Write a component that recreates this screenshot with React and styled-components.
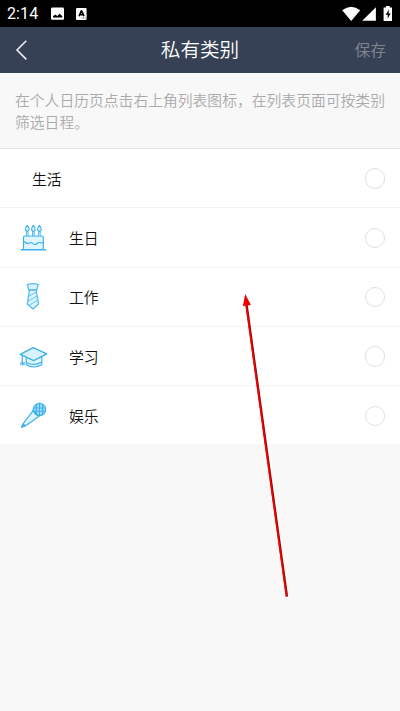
import React from "react";
import styled, { createGlobalStyle } from "styled-components";

const GlobalStyle = createGlobalStyle`
  * { box-sizing: border-box; }
  html, body { margin: 0; background: #f8f8f8; }
  body { font-family: Roboto, "Noto Sans CJK SC", sans-serif; }
`;

const Screen = styled.div`
  position: relative;
  display: flex;
  flex-direction: column;
  width: 400px;
  height: 711px;
  overflow: hidden;
  background: #f8f8f8;
`;

const StatusBar = styled.div`
  display: flex;
  align-items: center;
  justify-content: space-between;
  flex: none;
  height: 27px;
  padding: 0 7px;
  background: #000;
  color: #fff;
`;

const StatusGroup = styled.div`
  display: flex;
  align-items: center;
  gap: 12px;
`;

const Clock = styled.span`
  width: 32px;
  padding-top: 1px;
  font-size: 16px;
  line-height: 26px;
  font-weight: 400;
  letter-spacing: 0.1px;
`;

const Header = styled.header`
  display: grid;
  grid-template-columns: 80px 1fr 80px;
  align-items: center;
  flex: none;
  height: 46px;
  padding: 0 14px;
  background: #364156;
  color: #fff;
`;

const BackButton = styled.button`
  display: flex;
  padding: 0;
  border: 0;
  background: none;
  color: #f0f2f5;
`;

const Title = styled.h1`
  margin: 0;
  padding-top: 2px;
  font-size: 19.6px;
  line-height: 44px;
  font-weight: 350;
  text-align: center;
`;

const SaveButton = styled.button`
  padding: 2px 0 0;
  border: 0;
  background: none;
  color: #7f848d;
  font: inherit;
  font-size: 15.6px;
  line-height: 44px;
  text-align: right;
`;

const Hint = styled.p`
  flex: none;
  height: 76px;
  margin: 0;
  padding: 18px 0 0 15px;
  border-bottom: 1px solid #dfe3ea;
  color: #aaa;
  font-size: 14.8px;
  line-height: 21.5px;
  font-weight: 350;
  white-space: nowrap;
`;

const List = styled.ul`
  flex: none;
  margin: 0;
  padding: 0;
  list-style: none;
  background: #fff;
`;

const Row = styled.li`
  display: flex;
  align-items: center;
  height: 59.3px;
  padding: 1px 15px 0 ${(p) => (p.$plain ? "32px" : "19px")};
  border-bottom: 1px solid #f2f2f2;

  &:last-child {
    height: 58.3px;
    border-bottom: 0;
  }
`;

const RowIcon = styled.span`
  display: flex;
  width: 50px;
`;

const Label = styled.span`
  flex: 1;
  padding-top: 2px;
  color: #111;
  font-size: 14.8px;
  line-height: 22px;
  font-weight: 350;
`;

const Radio = styled.span`
  width: 20.5px;
  height: 20.5px;
  border: 1.4px solid #e0e0e0;
  border-radius: 50%;
`;

const Arrow = styled.svg`
  position: absolute;
  left: 240px;
  top: 290px;
  pointer-events: none;
`;

const PhotoIcon = () => (
  <svg width="13" height="13" viewBox="0 0 13 13">
    <rect width="13" height="12.4" y=".4" rx="1.3" fill="#fff" />
    <path d="M2 10.6V9.2L4.3 7.6 6.3 9 8.7 6.8 11.3 9.2V10.6Z" fill="#000" />
  </svg>
);

const KeyboardBadgeIcon = () => (
  <svg width="11" height="12" viewBox="0 0 11 12">
    <rect width="10.6" height="12" rx="1" fill="#fff" />
    <path d="M3 8.2 5.2 3h.5L8 8.2M3.8 6.6h3.3" fill="none" stroke="#000" strokeWidth="1.6" />
    <path d="M5.5 10h1M7.1 10h1M8.7 10h1" stroke="#333" strokeWidth=".8" />
  </svg>
);

const SignalIcons = () => (
  <svg width="51" height="16" viewBox="0 0 51 16">
    <g fill="#fff">
      <path d="M.2 4.2Q9.2-2.8 18.2 4.2L9.2 15Z" />
      <path d="M20.2 14.8 33.9 1.3V14.8Z" />
      <path d="M41.6 1.6H44V0h3.7v1.6H50V14.9H41.6Z" />
    </g>
    <path d="M47 3.6 43.6 8.8h2.1v3.8l3-5h-2.1Z" fill="#000" />
  </svg>
);

const BackIcon = () => (
  <svg width="14" height="22" viewBox="0 0 14 22">
    <path d="M12.3 1.8 3 11 12.3 20.4" fill="none" stroke="currentColor" strokeWidth="1.5" />
  </svg>
);

const LineIcon = ({ children }) => (
  <svg width="30" height="30" viewBox="0 0 30 30" fill="none" stroke="#3cb1e9" strokeWidth="1.15" strokeLinecap="round" strokeLinejoin="round">
    {children}
  </svg>
);

const CakeIcon = () => (
  <LineIcon>
    <path d="M4.5 26.5V14.5Q4.5 13 6 13H22.8Q24.3 13 24.3 14.5V26.5Z" fill="#e0f5ff" />
    <path d="M2.3 26.7H26.5" strokeWidth="1.4" />
    <path d="M4.5 18.5c2 0 2 2 4 2s2-1 3.5-1 2 2 4 2 2-2 4-2 2 1 4.3 0" />
    {[8.2, 14.4, 20.4].map((x) => (
      <g key={x}>
        <path d={`M${x - 0.8} 13V8.5H${x + 0.8}V13`} fill="#d9f2ff" strokeWidth=".9" />
        <path d={`M${x} 2.4C${x - 3.2} 5.8 ${x - 1.6} 8.2 ${x} 8.2S${x + 3.2} 5.8 ${x} 2.4Z`} fill="#d9f2ff" />
      </g>
    ))}
  </LineIcon>
);

const TieIcon = () => (
  <LineIcon>
    <g stroke="#58bced" fill="#dcf3ff" strokeWidth="1.3">
      <path d="M8.2 2.6Q14 .8 19.2 2.6L17.8 8H9.8Z" />
      <path d="M10.5 8.2H17L19.6 22 14 27 8.2 22Z" />
      <path d="m9.8 14.2 7.3-3.9M9 19.1l8.8-4.8M10.5 23l8.2-4.8" strokeWidth=".9" />
    </g>
  </LineIcon>
);

const CapIcon = () => (
  <LineIcon>
    <path d="M7.2 14.5V22.8Q14.5 27.2 22.8 22.8V14.5" fill="#e0f5ff" />
    <path d="M1.2 12.3 14.2 5.6 27.7 11.8 14.7 18.6Z" fill="#d8f2ff" strokeWidth="1.3" />
    <path d="M7.5 20.5Q14.7 24.5 22.5 20.2M3.3 13.4V20M2.2 20.4 1.8 22.8M3.6 20.5V23M5 20.3V22.8" />
  </LineIcon>
);

const MicIcon = () => (
  <LineIcon>
    <path d="M14 9.8 4.2 22.7 2.6 26.3 6.6 24.8 20 15.3Z" fill="#dff4ff" />
    <path d="M2.6 26.3 4.2 22.9 6.4 24.6Z" fill="#3cb1e9" />
    <circle cx="20.5" cy="8.4" r="6.1" fill="#a4deff" strokeWidth="1.3" />
    <path d="M17.4 3.6V13.2M20.5 2.4V14.4M23.6 3.6V13.2M14.6 7H26.4M14.6 10.2H26.2M13.8 9.2 19.7 14.7" strokeWidth="1.1" />
  </LineIcon>
);

const categories = [
  { name: "生活" },
  { name: "生日", Icon: CakeIcon },
  { name: "工作", Icon: TieIcon },
  { name: "学习", Icon: CapIcon },
  { name: "娱乐", Icon: MicIcon },
];

export default function App() {
  return (
    <Screen>
      <GlobalStyle />
      <StatusBar>
        <StatusGroup>
          <Clock>2:14</Clock>
          <PhotoIcon />
          <KeyboardBadgeIcon />
        </StatusGroup>
        <SignalIcons />
      </StatusBar>
      <Header>
        <BackButton aria-label="返回"><BackIcon /></BackButton>
        <Title>私有类别</Title>
        <SaveButton>保存</SaveButton>
      </Header>
      <Hint>
        在个人日历页点击右上角列表图标，在列表页面可按类别
        <br />
        筛选日程。
      </Hint>
      <List>
        {categories.map(({ name, Icon }) => (
          <Row key={name} $plain={!Icon}>
            {Icon && <RowIcon><Icon /></RowIcon>}
            <Label>{name}</Label>
            <Radio />
          </Row>
        ))}
      </List>
      <Arrow width="52" height="312" viewBox="0 0 52 312">
        <path d="M6.5 14 47 306.5" stroke="#7d0808" strokeWidth="2.2" />
        <path d="M6 14 46.5 306.5" stroke="#f20000" strokeWidth="1.7" />
        <path d="M5.2 4 10.9 15 2.9 16Z" fill="#f20000" />
      </Arrow>
    </Screen>
  );
}
